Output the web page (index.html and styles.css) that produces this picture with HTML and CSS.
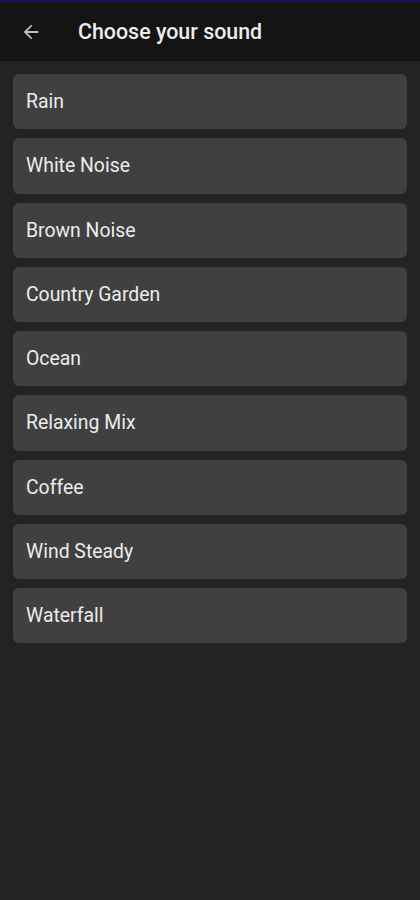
FILE: index.html
```html
<!DOCTYPE html>
<html lang="en">
<head>
    <meta charset="UTF-8">
    <meta name="viewport" content="width=device-width, initial-scale=1.0">
    <title>Choose your sound</title>
    <link rel="stylesheet" href="styles.css">
</head>
<body>
    <div class="status-line"></div>
    <header class="toolbar">
        <button class="back" aria-label="Back">
            <svg width="22" height="22" viewBox="0 0 24 24">
                <path d="M20 11H7.83l5.59-5.59L12 4l-8 8 8 8 1.41-1.41L7.83 13H20v-2z" fill="#bdbdbd"/>
            </svg>
        </button>
        <h1 class="title">Choose your sound</h1>
    </header>

    <ul class="sound-list">
        <li class="sound">Rain</li>
        <li class="sound">White Noise</li>
        <li class="sound">Brown Noise</li>
        <li class="sound">Country Garden</li>
        <li class="sound">Ocean</li>
        <li class="sound">Relaxing Mix</li>
        <li class="sound">Coffee</li>
        <li class="sound">Wind Steady</li>
        <li class="sound">Waterfall</li>
    </ul>
</body>
</html>
```

FILE: styles.css
```css
body {
    margin: 0;
    background-color: #232323;
    font-family: Roboto, "Noto Sans", sans-serif;
    color: #ececec;
    min-height: 900px;
}
.status-line {
    height: 2px;
    background-color: #1d0f5e;
}
.toolbar {
    display: flex;
    align-items: center;
    height: 59px;
    background-color: #141414;
}
.back {
    background: none;
    border: none;
    padding: 0;
    margin-left: 20px;
    width: 22px;
    height: 22px;
    display: flex;
}
.title {
    margin: 0 0 0 36px;
    font-size: 21.4px;
    font-weight: 500;
    color: #ececec;
}
.sound-list {
    list-style: none;
    margin: 0;
    padding: 13px 13px 0 13px;
    display: flex;
    flex-direction: column;
    gap: 9px;
}
.sound {
    height: 55.25px;
    display: flex;
    align-items: center;
    padding-left: 13px;
    background-color: #404040;
    border-radius: 6px;
    font-size: 19.4px;
}
```
